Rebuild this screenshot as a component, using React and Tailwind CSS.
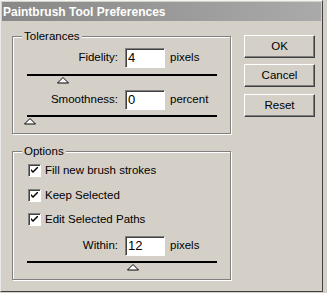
import React from 'react'

const font = { fontFamily: '"Liberation Sans", Arial, sans-serif' }

const Thumb = ({ left }) => (
  <svg className='absolute top-[3px]' style={{ left }} width='12' height='7' viewBox='0 0 12 7'>
    <polygon points='6,0.5 11.5,6 0.5,6' fill='#fff' stroke='#000' strokeWidth='1' />
  </svg>
)

const Slider = ({ thumb, className }) => (
  <div className={`relative ml-[14px] w-[190px] h-[8px] ${className}`}>
    <div className='h-[2px] bg-black' />
    <Thumb left={thumb} />
  </div>
)

const Field = ({ label, value, unit, className }) => (
  <div className={`flex items-center h-[20px] ${className}`}>
    <div className='w-[105px] text-right text-[11.5px]'>{label}</div>
    <div className='ml-[7px] w-[40px] h-[20px] bg-white border border-t-[#808080] border-l-[#808080] border-b-white border-r-white shadow-[inset_1px_1px_0_#404040] pl-[2px] text-[13px] leading-[18px]'>
      {value}
    </div>
    <div className='ml-[5px] text-[11.5px]'>{unit}</div>
  </div>
)

const Check = ({ label, className }) => (
  <div className={`flex items-center h-[13px] ml-[15px] ${className}`}>
    <div className='w-[13px] h-[13px] bg-white border border-t-[#808080] border-l-[#808080] border-b-white border-r-white shadow-[inset_1px_1px_0_#404040] flex items-center justify-center'>
      <svg width='7' height='7' viewBox='0 0 7 7'>
        <path d='M0 2 L0 4 L2 6 L7 1 L7 -1 L2 4 Z' fill='#000' />
      </svg>
    </div>
    <div className='ml-[4px] text-[11.5px]'>{label}</div>
  </div>
)

const Group = ({ title, className, children }) => (
  <div className={`w-[219px] border border-[#808080] shadow-[inset_1px_1px_0_#fff,1px_1px_0_#fff] ${className}`}>
    <div className='-mt-[8px] ml-[9px] w-fit px-[2px] bg-[#d4d0c8] text-[11.5px] leading-[14px]'>{title}</div>
    {children}
  </div>
)

const Btn = ({ children, className }) => (
  <button className={`w-[71px] h-[23px] bg-[#d4d0c8] border border-t-white border-l-white border-b-[#404040] border-r-[#404040] shadow-[inset_-1px_-1px_0_#808080] text-[11.5px] text-black ${className}`}>
    {children}
  </button>
)

const App = () => {
  return (
    <div className='w-[327px] h-[293px] bg-[#d4d0c8] overflow-hidden text-black' style={font}>
      <div className='w-[323px] h-[292px] border border-t-[#f4f4f4] border-l-[#e8e8e8] border-r-[#404040] border-b-[#404040]'>
        <div className='mx-[1px] mt-[1px] h-[19px] bg-gradient-to-r from-[#888888] to-[#aaaaaa] pl-[1px] flex items-center text-white font-bold text-[12px]'>
          Paintbrush Tool Preferences
        </div>

        <div className='flex pl-[11px]'>
          <div className='flex flex-col'>
            {/* tolerances */}
            <Group title='Tolerances' className='mt-[15px] h-[98px]'>
              <Field label='Fidelity:' value='4' unit='pixels' className='mt-[5px]' />
              <Slider thumb={30} className='mt-[6px]' />
              <Field label='Smoothness:' value='0' unit='percent' className='mt-[8px]' />
              <Slider thumb={-3} className='mt-[5px]' />
            </Group>

            {/* options */}
            <Group title='Options' className='mt-[17px] h-[129px]'>
              <Check label='Fill new brush strokes' className='mt-[6px]' />
              <Check label='Keep Selected' className='mt-[12px]' />
              <Check label='Edit Selected Paths' className='mt-[11px]' />
              <Field label='Within:' value='12' unit='pixels' className='mt-[10px]' />
              <Slider thumb={100} className='mt-[5px]' />
            </Group>
          </div>

          <div className='ml-[13px] mt-[14px] flex flex-col'>
            <Btn>OK</Btn>
            <Btn className='mt-[6px]'>Cancel</Btn>
            <Btn className='mt-[7px]'>Reset</Btn>
          </div>
        </div>
      </div>
    </div>
  )
}

export default App
